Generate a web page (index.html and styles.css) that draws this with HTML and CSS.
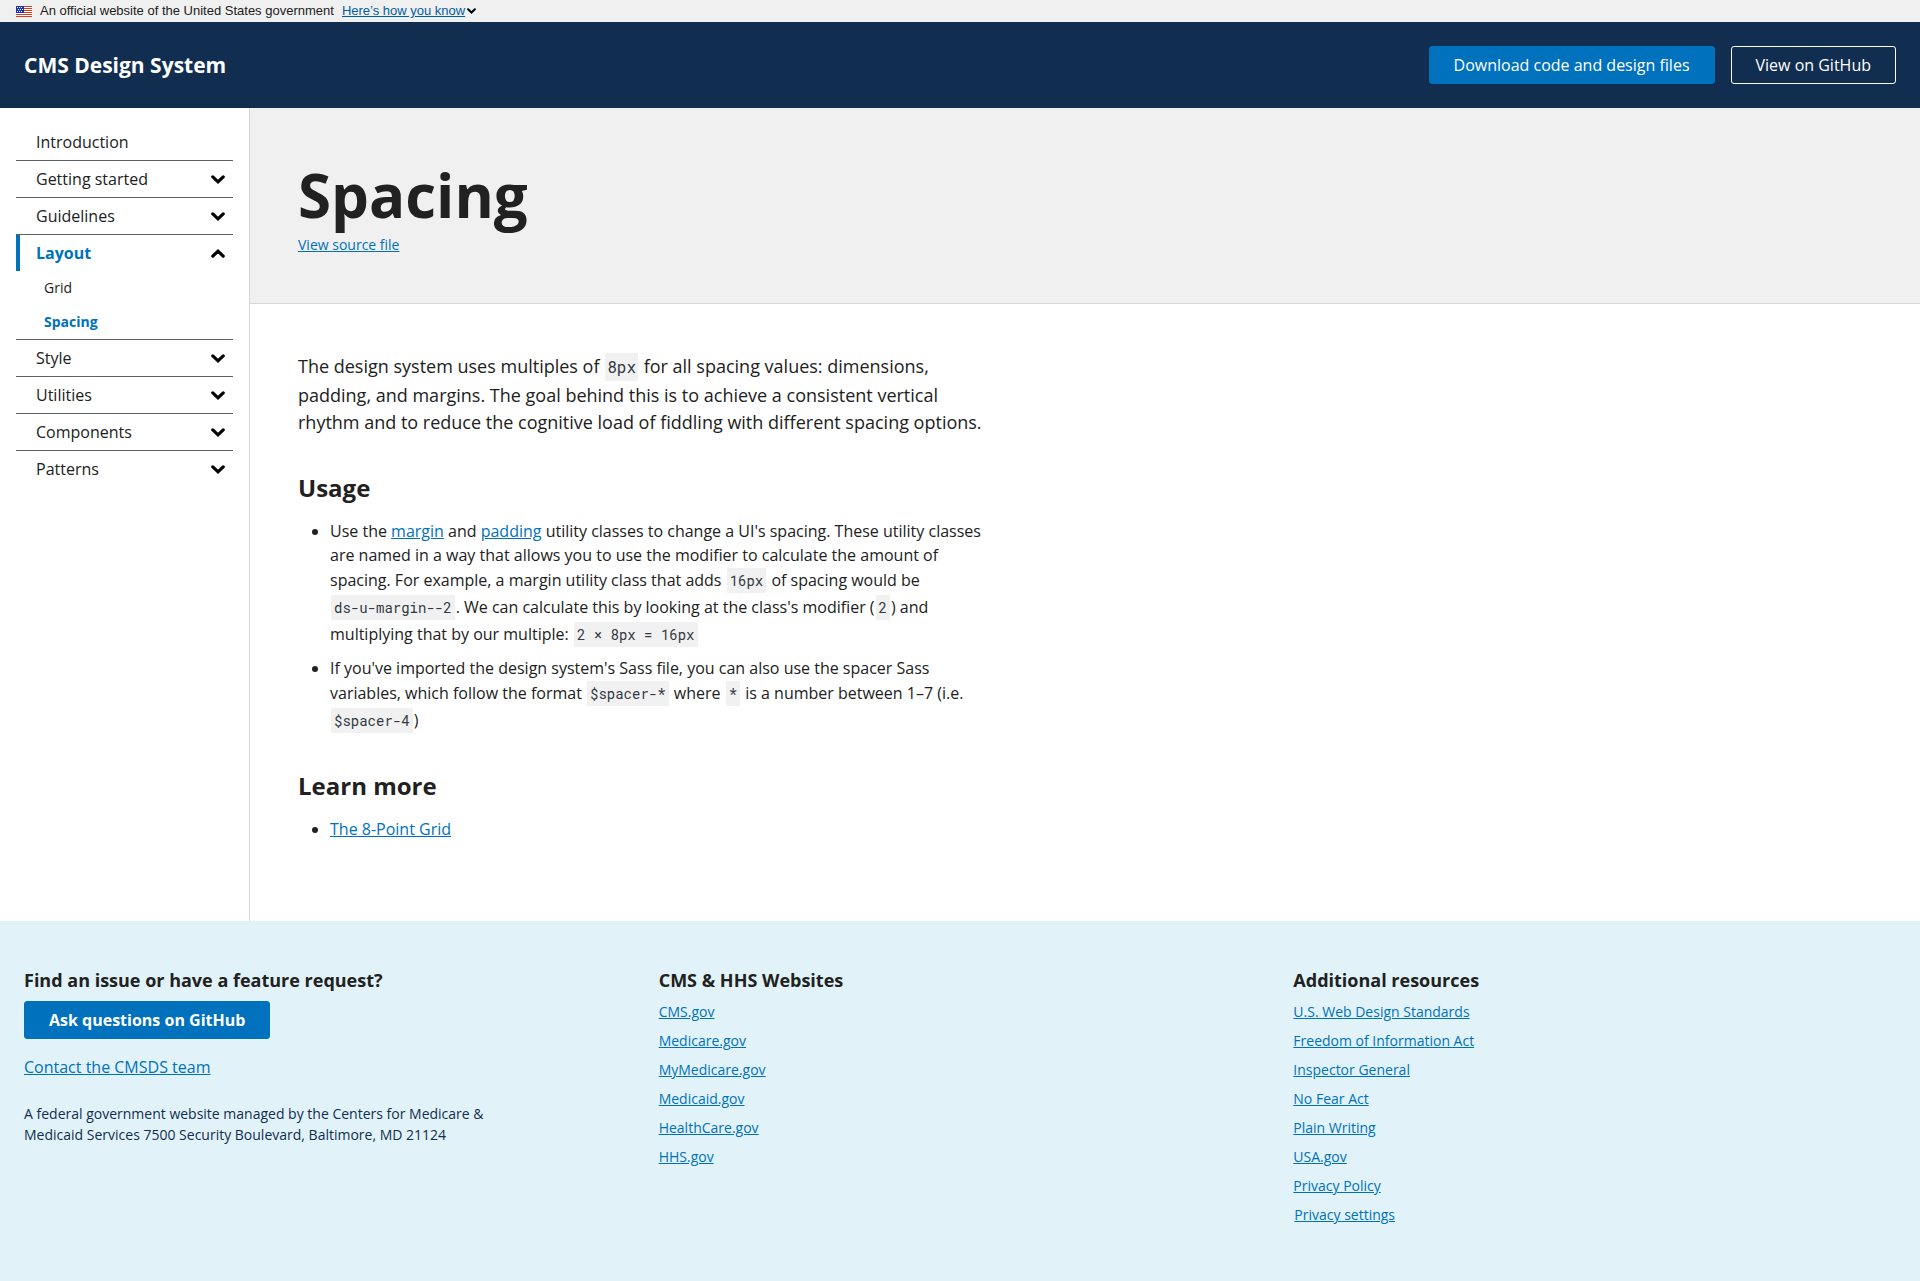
FILE: index.html
```html
<!DOCTYPE html>
<html lang="en">
<head>
<meta charset="utf-8">
<meta name="viewport" content="width=device-width, initial-scale=1">
<title>Spacing - CMS Design System</title>
<link rel="stylesheet" href="styles.css">
</head>
<body>
<svg class="sprite" aria-hidden="true">
  <symbol id="chevron" viewBox="0 0 14 9"><path d="M1.8 1.9L7 6.8l5.2-4.9" fill="none" stroke="currentColor" stroke-width="3.2" stroke-linecap="round"/></symbol>
</svg>
<div class="banner">
  <svg class="flag" viewBox="0 0 16 11" aria-hidden="true">
    <path fill="#fff" d="M0 0h16v11H0z"/>
    <path fill="#db3e1f" d="M8 0h8v1H8zM8 2h8v1H8zM8 4h8v1H8zM8 6h8v1H8zM0 8h16v1H0zM0 10h16v1H0z"/>
    <path fill="#1e33b1" d="M0 0h8v7H0z"/>
    <path fill="#fff" d="M1 1h1v1H1zM3 1h1v1H3zM5 1h1v1H5zM2 3h1v1H2zM4 3h1v1H4zM6 3h1v1H6zM1 5h1v1H1zM3 5h1v1H3zM5 5h1v1H5z"/>
  </svg>
  <span>An official website of the United States government</span>
  <button type="button" class="banner-toggle"><span class="banner-link">Here’s how you know</span><svg class="banner-chevron" aria-hidden="true"><use href="#chevron"/></svg></button>
</div>
<header class="header">
  <span class="brand">CMS Design System</span>
  <div class="header-actions">
    <a class="button button-primary" href="#download">Download code and design files</a>
    <a class="button button-inverse" href="#github">View on GitHub</a>
  </div>
</header>
<div class="layout">
  <nav class="sidebar" aria-label="Main">
    <ul class="nav">
      <li class="nav-item"><a class="nav-label" href="#introduction">Introduction</a></li>
      <li class="nav-item"><button type="button" class="nav-label">Getting started<svg class="chevron" aria-hidden="true"><use href="#chevron"/></svg></button></li>
      <li class="nav-item"><button type="button" class="nav-label">Guidelines<svg class="chevron" aria-hidden="true"><use href="#chevron"/></svg></button></li>
      <li class="nav-item">
        <button type="button" class="nav-label nav-label-current" aria-expanded="true">Layout<svg class="chevron chevron-up" aria-hidden="true"><use href="#chevron"/></svg></button>
        <ul class="subnav">
          <li><a class="subnav-link" href="#grid">Grid</a></li>
          <li><a class="subnav-link subnav-link-current" href="#spacing" aria-current="page">Spacing</a></li>
        </ul>
      </li>
      <li class="nav-item"><button type="button" class="nav-label">Style<svg class="chevron" aria-hidden="true"><use href="#chevron"/></svg></button></li>
      <li class="nav-item"><button type="button" class="nav-label">Utilities<svg class="chevron" aria-hidden="true"><use href="#chevron"/></svg></button></li>
      <li class="nav-item"><button type="button" class="nav-label">Components<svg class="chevron" aria-hidden="true"><use href="#chevron"/></svg></button></li>
      <li class="nav-item"><button type="button" class="nav-label">Patterns<svg class="chevron" aria-hidden="true"><use href="#chevron"/></svg></button></li>
    </ul>
  </nav>
  <main class="main">
    <div class="page-header">
      <h1 class="page-title">Spacing</h1>
      <a class="source-link" href="#source">View source file</a>
    </div>
    <article class="content">
      <p class="lead">The design system uses multiples of <code class="code">8px</code> for all spacing values: dimensions, padding, and margins. The goal behind this is to achieve a consistent vertical rhythm and to reduce the cognitive load of fiddling with different spacing options.</p>
      <h2 class="section-title">Usage</h2>
      <ul class="bullets">
        <li>Use the <a href="#margin">margin</a> and <a href="#padding">padding</a> utility classes to change a UI's spacing. These utility classes are named in a way that allows you to use the modifier to calculate the amount of spacing. For example, a margin utility class that adds <code class="code">16px</code> of spacing would be <code class="code">ds-u-margin--2</code>. We can calculate this by looking at the class's modifier (<code class="code">2</code>) and multiplying that by our multiple: <code class="code">2 × 8px = 16px</code></li>
        <li>If you've imported the design system's Sass file, you can also use the spacer Sass variables, which follow the format <code class="code">$spacer-*</code> where <code class="code">*</code> is a number between 1–7 (i.e. <code class="code">$spacer-4</code>)</li>
      </ul>
      <h2 class="section-title">Learn more</h2>
      <ul class="bullets">
        <li><a href="#grid-article">The 8-Point Grid</a></li>
      </ul>
    </article>
  </main>
</div>
<footer class="footer">
  <div class="footer-column">
    <h2 class="footer-title">Find an issue or have a feature request?</h2>
    <a class="button button-primary button-bold" href="#questions">Ask questions on GitHub</a>
    <p class="contact"><a href="#contact">Contact the CMSDS team</a></p>
    <p class="address">A federal government website managed by the Centers for Medicare &amp; Medicaid Services 7500 Security Boulevard, Baltimore, MD 21124</p>
  </div>
  <div class="footer-column">
    <h2 class="footer-title">CMS &amp; HHS Websites</h2>
    <ul class="footer-links">
      <li><a href="#cms">CMS.gov</a></li>
      <li><a href="#medicare">Medicare.gov</a></li>
      <li><a href="#mymedicare">MyMedicare.gov</a></li>
      <li><a href="#medicaid">Medicaid.gov</a></li>
      <li><a href="#healthcare">HealthCare.gov</a></li>
      <li><a href="#hhs">HHS.gov</a></li>
    </ul>
  </div>
  <div class="footer-column">
    <h2 class="footer-title">Additional resources</h2>
    <ul class="footer-links">
      <li><a href="#standards">U.S. Web Design Standards</a></li>
      <li><a href="#foia">Freedom of Information Act</a></li>
      <li><a href="#inspector">Inspector General</a></li>
      <li><a href="#no-fear">No Fear Act</a></li>
      <li><a href="#plain-writing">Plain Writing</a></li>
      <li><a href="#usa">USA.gov</a></li>
      <li><a href="#privacy">Privacy Policy</a></li>
      <li><button type="button" class="link-button">Privacy settings</button></li>
    </ul>
  </div>
</footer>
</body>
</html>
```
FILE: styles.css
```css
* { box-sizing: border-box; }

body {
  margin: 0;
  min-height: 100vh;
  display: flex;
  flex-direction: column;
  background: #fff;
  color: #212121;
  font: 16px/24px "Open Sans", sans-serif;
}

h1, h2, p, ul { margin: 0; }
ul { padding: 0; list-style: none; }
a { color: #0071bc; }
button { border: 0; padding: 0; background: none; color: inherit; font: inherit; cursor: pointer; }
.sprite { display: none; }

.banner {
  display: flex;
  align-items: center;
  gap: 8px;
  height: 22px;
  padding: 0 16px;
  background: #f0f0f0;
  font: 13px/22px "Liberation Sans", Arial, sans-serif;
}
.flag { width: 16px; height: 11px; }
.banner-toggle { display: flex; align-items: center; gap: 2px; }
.banner-link { color: #005ea2; text-decoration: underline; }
.banner-chevron { width: 9px; height: 6px; color: #000; }

.header {
  display: flex;
  align-items: center;
  justify-content: space-between;
  padding: 24px;
  background: #112e51;
}
.brand { color: #fff; font-size: 21px; font-weight: 700; }
.header-actions { display: flex; gap: 16px; }

.button {
  display: inline-block;
  border: 1px solid transparent;
  border-radius: 3px;
  padding: 6px 24px;
  color: #fff;
  text-decoration: none;
}
.button-primary { background: #0071bc; border-color: #0071bc; }
.button-inverse { border-color: #fff; }
.button-bold { font-weight: 700; }

.layout { display: flex; flex: 1 0 auto; }

.sidebar {
  flex: 0 0 250px;
  padding: 16px;
  border-right: 1px solid #d6d7d9;
}
.nav-item + .nav-item { border-top: 1px solid #5b616b; }
.nav-label {
  display: flex;
  align-items: center;
  justify-content: space-between;
  width: 100%;
  padding: 6px 8px 6px 16px;
  border-left: 4px solid transparent;
  color: #212121;
  text-align: left;
  text-decoration: none;
}
.nav-label-current { border-left-color: #0071bc; color: #0071bc; font-weight: 700; }
.chevron { width: 14px; height: 9px; color: #000; }
.chevron-up { transform: rotate(180deg); }
.subnav-link {
  display: block;
  padding: 6px 28px;
  color: #212121;
  font-size: 14px;
  line-height: 22px;
  text-decoration: none;
}
.subnav-link-current { color: #0071bc; font-weight: 700; }

.main { flex: 1; min-width: 0; }
.page-header {
  padding: 48px;
  background: #f0f0f0;
  border-bottom: 1px solid #d6d7d9;
}
.page-title { font-size: 60px; line-height: 78px; }
.source-link { display: block; width: fit-content; font-size: 14px; line-height: 21px; }

.content { max-width: 784px; padding: 48px 48px 80px; }
.lead { font-size: 18px; line-height: 27px; }
.section-title { margin: 36px 0 16px; font-size: 24px; line-height: 31px; }
.bullets { padding-left: 32px; list-style: disc; }
.bullets li + li { margin-top: 8px; }
.code {
  display: inline-block;
  margin: 1px;
  padding: 2px 3px;
  background: #f1f1f1;
  color: #323a45;
  font: 14px/21px "Roboto Mono", "Liberation Mono", monospace;
}
.lead .code { padding: 2px; font-size: 16px; line-height: 24px; }

.footer {
  display: grid;
  grid-template-columns: repeat(3, 1fr);
  padding: 48px 8px;
  background: #e1f3f8;
}
.footer-column { padding: 0 16px; }
.footer-title { margin-bottom: 9px; font-size: 18px; line-height: 23px; }
.contact { margin-top: 16px; }
.address { max-width: 480px; margin-top: 24px; color: #112e51; font-size: 14px; line-height: 21px; }
.footer-links { font-size: 14px; line-height: 21px; }
.footer-links li { margin-bottom: 8px; }
.link-button { display: block; padding: 0 1px; color: #0071bc; text-decoration: underline; }
```
